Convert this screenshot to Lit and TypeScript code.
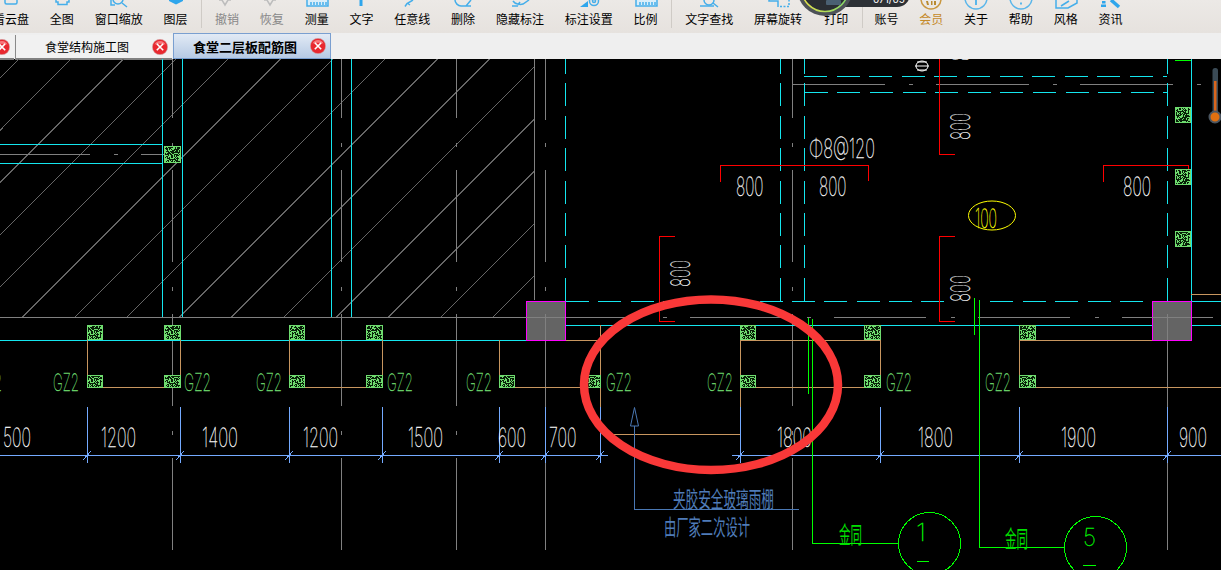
import { LitElement, html, css, svg } from "lit";
import { customElement } from "lit/decorators.js";

type Seg = [number, number, number, number];
const path = (cls: string, segs: Seg[]) =>
  svg`<path class=${"ln " + cls} d=${segs.map((s) => `M${s[0]} ${s[1]}L${s[2]} ${s[3]}`).join("")}></path>`;

const px = (v: number) => Math.floor(v) + 0.5;
const V = (x: number, a: number, b: number): Seg => [px(x), a, px(x), b];
const H = (y: number, a: number, b: number): Seg => [a, px(y), b, px(y)];

function dashV(x: number, from: number, to: number, start: number, period: number, on: number): Seg[] {
  const out: Seg[] = [];
  for (let s = start; s < to; s += period) {
    const a = Math.max(s, from);
    const b = Math.min(s + on, to);
    if (b > a) out.push(V(x, a, b));
  }
  return out;
}
function dashH(y: number, from: number, to: number, start: number, period: number, on: number): Seg[] {
  const out: Seg[] = [];
  for (let s = start; s < to; s += period) {
    const a = Math.max(s, from);
    const b = Math.min(s + on, to);
    if (b > a) out.push(H(y, a, b));
  }
  return out;
}

const hatch: Seg[] = [];
for (let k = -2; k < 18; k++) {
  const c = 78 + k * 52.3;
  hatch.push([c - 59, 59, c - 317, 317]);
}

const greyV = [172, 341.5, 456, 792];
const grey: Seg[] = [];
for (const x of greyV) {
  for (let s = 26; s < 570; s += 144) {
    grey.push(V(x, s, s + 92));
    grey.push(V(x, s + 117, s + 121));
  }
}
grey.push(V(534, 59, 300), V(545, 59, 120), V(545, 143, 147), V(545, 170, 262), V(545, 287, 291), V(545, 314, 407), V(545, 458, 550));
grey.push(V(1167, 314, 407), V(1167, 458, 550));
grey.push(H(317, 0, 526), H(154, 0, 90), H(154, 114, 118), H(154, 141, 165));
for (let s = 545.5; s < 1221; s += 144) {
  grey.push(H(317, s, Math.min(s + 92, 1213)));
  grey.push(H(317, s + 117, s + 121));
}
for (let s = 792; s < 1200; s += 144) {
  grey.push(H(84, s, s + 93));
  grey.push(H(84, s + 117, s + 121));
}

const cyan: Seg[] = [
  V(162, 59, 317), V(182, 59, 317), V(331, 59, 317), V(351, 59, 317), V(1191, 59, 301),
  H(144, 0, 162), H(163, 0, 162),
  H(340, 0, 526), H(325, 565, 1221), H(301, 1191, 1221),
  ...dashV(565, 59, 301, 50.9, 32.4, 23),
  ...dashV(780, 59, 301, 50.9, 32.4, 23),
  ...dashV(804, 59, 301, 50.9, 32.4, 23),
  ...dashV(1167, 59, 301, 50.9, 32.4, 23),
  ...dashH(76, 804, 1167, 804, 32.6, 23),
  ...dashH(92, 804, 1167, 804.7, 32.6, 23),
  ...dashH(301, 566, 947, 566, 32.3, 23),
  ...dashH(301, 990, 1152, 990, 32.5, 23),
];

const orange: Seg[] = [
  H(387, 87, 180), H(387, 289, 382), H(387, 499, 600), H(387, 740, 880), H(387, 1019, 1221),
  H(340, 565, 600), H(340, 740, 880), H(340, 1019, 1152),
  H(434, 610, 740), H(294, 1191, 1221),
  V(87, 340, 388), V(180, 340, 388), V(289, 340, 388), V(382, 340, 388), V(499, 340, 388),
  V(600, 325, 407), V(740, 340, 407), V(880, 325, 388), V(1019, 325, 388),
];

const dimX = [87, 180, 289, 382, 499, 545, 600, 740, 880, 1019, 1167];
const blue: Seg[] = [H(455, 0, 608), H(455, 732, 1221)];
for (const x of dimX) {
  blue.push(V(x, 407, 463));
  blue.push([x - 4, 460, x + 4, 451]);
}

const red: Seg[] = [
  H(165, 720, 868), V(720, 165, 182), V(868, 165, 181),
  H(165, 1103, 1188), V(1103, 165, 182), V(1188, 165, 180),
  V(939, 59, 154), H(154, 939, 955),
  H(236, 939, 955), V(939, 236, 321), H(321, 939, 955),
  H(236, 659, 675), V(659, 236, 321), H(321, 659, 675),
];

const green: Seg[] = [
  V(812, 319, 543), H(543, 812, 898), V(808, 318, 394),
  V(979, 300, 547), H(547, 979, 1065), V(974, 298, 335),
  H(60, 1175, 1191),
  H(561, 917, 929), H(565, 1083, 1096),
];

const steel: Seg[] = [V(634, 426, 509), H(509, 634, 799)];

const blocks: [number, number, number, number][] = [
  [164, 146, 17, 17],
  [87, 325, 16, 15], [164, 325, 17, 15], [289, 325, 16, 15], [366, 325, 17, 15],
  [87, 375, 16, 13], [164, 375, 17, 13], [289, 375, 16, 13], [366, 375, 17, 13],
  [499, 375, 16, 13], [586, 375, 15, 13],
  [740, 325, 16, 15], [740, 375, 16, 13],
  [864, 325, 17, 15], [864, 375, 17, 13],
  [1019, 325, 17, 15], [1019, 375, 17, 13],
  [1175, 107, 16, 16], [1175, 169, 16, 16], [1175, 231, 16, 16],
];

let seed = 17;
const rnd = () => ((seed = (seed * 16807) % 2147483647) / 2147483647);
const noise: [number, number][] = [];
for (let y = 0; y < 16; y++) for (let x = 0; x < 16; x++) if (rnd() < 0.55) noise.push([x, y]);

const labels: [string, string, number, number, number][] = [
  ["dim", "500", 3, 447, 28], ["dim", "1200", 101, 447, 35], ["dim", "1400", 202, 447, 36],
  ["dim", "1200", 303, 447, 35], ["dim", "1500", 408, 447, 35], ["dim", "600", 498, 447, 28],
  ["dim", "700", 549, 447, 27.5], ["dim", "1800", 777, 447, 35], ["dim", "1800", 918, 447, 35],
  ["dim", "1900", 1061, 447, 35], ["dim", "900", 1179, 447, 28],
  ["dim", "800", 736, 196, 27.5], ["dim", "800", 819, 196, 27.5], ["dim", "800", 1123, 196, 28],
  ["dim", "Φ8@120", 809, 158, 66],
  ["gz", "GZ2", -24, 391, 26], ["gz", "GZ2", 53, 391, 26], ["gz", "GZ2", 184, 391, 27],
  ["gz", "GZ2", 256, 391, 26], ["gz", "GZ2", 387, 391, 26], ["gz", "GZ2", 466, 391, 26],
  ["gz", "GZ2", 606, 391, 26], ["gz", "GZ2", 707, 391, 26], ["gz", "GZ2", 886, 391, 26],
  ["gz", "GZ2", 985, 391, 26],
  ["yl", "100", 975, 228, 22],
  ["cn", "夹胶安全玻璃雨棚", 673, 507, 101], ["cn", "由厂家二次设计", 664, 535, 86],
  ["jt", "金同", 839, 543, 23], ["jt", "金同", 1005, 547, 23],
  ["num", "1", 916, 541, 10], ["num", "5", 1083, 546, 13],
];
const rotated: [number, number][] = [[970, 61], [970, 140], [970, 302], [690, 287]];

const ICONS: Record<string, unknown> = {
  cloud: svg`<path class="ib" d="M6 0v2.5Q6 4 7.5 4h9Q18 4 18 2.5V0"></path>`,
  full: svg`<path class="ib" d="M6 0v2h2v2.5h9V2h2V0"></path>`,
  zoom: svg`<circle class="ib" cx="11" cy="-1" r="5"></circle><path class="ib" d="M15 3l5 4M4 0v5h4"></path>`,
  layer: svg`<path class="fb" d="M6 0h14v1l-7 3.5L6 1z"></path>`,
  undo: svg`<path class="ig" d="M7 0l3 5 3-5M4 0h3M13 0h3"></path>`,
  ruler: svg`<path class="fl" d="M2 -1h21v7H2z"></path><path class="ib" d="M2 -1v7h21v-7M6 2v3M9 2v3M12 2v3M15 2v3M18 2v3M21 2v3"></path>`,
  text: svg`<path class="fb" d="M10.5 0h3v6h-3z"></path>`,
  pen: svg`<path class="ib" d="M5 6.5l2-3 6-3.5M7 3l3 2"></path>`,
  erase: svg`<path class="ib" d="M4 0c0 3 3 6 6 6h10M15 6l5-6"></path>`,
  eye: svg`<path class="ib" d="M5 1c2 3 7 4 10 3l6-4M4 6h6M10 5l2-3"></path>`,
  gear: svg`<path class="fb" d="M3 7h8V1z"></path><circle class="ib" cx="17" cy="1" r="4.5"></circle><circle class="ib" cx="17" cy="1" r="1.5"></circle>`,
  find: svg`<circle class="ib" cx="12" cy="0" r="5"></circle><path class="ib" d="M3 6h14M16 3l5 4"></path>`,
  rotate: svg`<path class="ib" d="M3 0v1h9v6"></path><path class="ibd" d="M14 6.5h9V0"></path>`,
  vip: svg`<circle class="io" cx="12" cy="-1" r="10"></circle><path class="fo" d="M7 1h2l1 4H8zM12 1h1.500v4H12zM15 1h2v4h-2z"></path>`,
  info: svg`<circle class="il" cx="12" cy="-2" r="11"></circle><path class="fl2" d="M11 0h2v5h-2z"></path>`,
  help: svg`<circle class="il" cx="12" cy="-2" r="11"></circle><path class="fl2" d="M11 2.500h2v2h-2z"></path>`,
  style: svg`<path class="ib" d="M2 0v8h12l9-5V0M7 6l8-5"></path>`,
  news: svg`<path class="fb" d="M4 1h3.500v2.500H4zM3 4.500h5V7H3z"></path><path class="wr" d="M13 0l8 7"></path>`,
};

type Item = { t: string; i?: string; cls?: string } | "sep" | "sep3";
const ITEMS: Item[] = [
  { t: "看云盘", i: "cloud" }, { t: "全图", i: "full" }, { t: "窗口缩放", i: "zoom" }, { t: "图层", i: "layer" }, "sep",
  { t: "撤销", i: "undo", cls: "off" }, { t: "恢复", i: "undo", cls: "off" }, { t: "测量", i: "ruler" }, { t: "文字", i: "text" },
  { t: "任意线", i: "pen" }, { t: "删除", i: "erase" }, { t: "隐藏标注", i: "eye" }, { t: "标注设置", i: "gear" }, { t: "比例", i: "ruler" }, "sep",
  { t: "文字查找", i: "find" }, { t: "屏幕旋转", i: "rotate" }, { t: "打印", cls: "nudge" }, "sep3",
  { t: "账号" }, { t: "会员", i: "vip", cls: "vip" }, { t: "关于", i: "info" }, { t: "帮助", i: "help" }, { t: "风格", i: "style" }, { t: "资讯", i: "news" },
];

@customElement("app-root")
export class AppRoot extends LitElement {
  static styles = css`
    :host { display: block; position: relative; width: 1221px; height: 570px; overflow: hidden; background: #000;
      font-family: "Noto Sans CJK SC", "Liberation Sans", sans-serif; }
    .bar { display: flex; gap: 20.8px; height: 33px; box-sizing: border-box; padding-left: 0; overflow: hidden;
      background: linear-gradient(#ece9e6, #e6e2de); }
    .bar > :first-child { margin-left: -7px; }
    .item { display: flex; flex-direction: column; align-items: center; flex: none; font-size: 12px; line-height: 14px; color: #000; }
    .item svg { display: block; width: 24px; height: 12px; overflow: hidden; flex: none; }
    .item.off { color: #888; }
    .item.vip { color: #c58a2a; }
    .item.nudge { margin-left: 1.4px; }
    .sep { width: 1px; height: 28px; background: #cfcbc6; margin: 0 -8px 0 -7px; flex: none; }
    .sep.s3 { margin-right: -9.4px; }
    .ib, .ig, .io, .il, .ibd { fill: none; stroke-width: 1.5; }
    .ib, .ibd { stroke: #45aeea; }
    .ibd { stroke-dasharray: 2 1.5; }
    .ig { stroke: #bdbdbd; }
    .io { stroke: #c9973f; }
    .il { stroke: #5ab6ea; }
    .fb { fill: #2fa6ec; }
    .fl { fill: #d9eefa; }
    .fl2 { fill: #5ab6ea; }
    .fo { fill: #b98a30; }
    .wr { fill: none; stroke: #2fa6ec; stroke-width: 3.5; }

    .tabs { display: flex; height: 26px; background: #efefef; gap: 1px; margin-left: -143px; }
    .tab { display: flex; align-items: center; box-sizing: border-box; width: 157px; height: 25px; margin-top: 2px; flex: none;
      border-left: 1px solid #8a8a8a; border-bottom: 2px solid #808080; background: #f1f1f1; font-size: 12px; color: #000; }
    .tab.on { width: 158px; height: 26px; margin-top: 0; border: 1px solid #7a9fd0; font-weight: 700; font-size: 13px;
      background: linear-gradient(#e2eaf5, #b6cae4); }
    .name { width: 136px; padding-left: 6px; box-sizing: border-box; text-align: center; white-space: nowrap; flex: none; }
    .x { width: 16px; height: 16px; display: block; flex: none; }
    .xc { fill: #e8282f; stroke: #c8c0c0; stroke-width: .5; }
    .xh { fill: #f8787c; }
    .xl { stroke: #fff; stroke-width: 1.6; fill: none; }

    .cad { display: block; width: 1221px; height: 511px; background: #000; }
    .ln { fill: none; stroke-width: 1; shape-rendering: crispEdges; }
    .hatch { stroke: #666; }
    .grey { stroke: #808080; }
    .cyan { stroke: #14e6ee; }
    .orange { stroke: #c8965f; }
    .blue { stroke: #74aaff; }
    .red { stroke: #ff0000; }
    .green { stroke: #00ff00; }
    .steel { stroke: #4a78b4; }
    .gb { fill: #6fdc6f; stroke: #6fdc6f; stroke-width: 1; shape-rendering: crispEdges; }
    .pk { fill: #082008; }
    .col { fill: #646464; stroke: #ff00ff; stroke-width: 1; shape-rendering: crispEdges; }
    .arrow { fill: #000; stroke: #4a78b4; stroke-width: 1; }
    .cir { fill: none; stroke: #00ff00; stroke-width: 1; shape-rendering: crispEdges; }
    .yel { fill: none; stroke: #ffff00; stroke-width: 1; }
    .sym { fill: none; stroke: #fff; stroke-width: 1; }
    .ring { fill: none; stroke: #f93838; stroke-width: 8.5; }

    text { font-family: "Inter", "Roboto", "Liberation Sans", sans-serif; font-weight: 100; }
    .dim { font-size: 26.5px; fill: #fff; stroke: #fff; stroke-width: .3; }
    .gz { font-size: 23.5px; fill: #6fdc6f; stroke: #6fdc6f; stroke-width: .3; }
    .yl { font-size: 26.5px; fill: #ffff00; stroke: #ffff00; stroke-width: .3; }
    .cn { font-family: "Noto Sans CJK SC", sans-serif; font-size: 22px; fill: #4f7cb8; font-weight: 400; }
    .jt { font-family: "Noto Sans CJK SC", sans-serif; font-size: 23px; fill: #00e000; font-weight: 400; }
    .num { font-size: 24px; fill: #00ff00; stroke: #00ff00; stroke-width: .3; }
    .tube { fill: #3a4a55; }
    .merc { fill: #d9651c; }
    .bulb { fill: #e07010; stroke: #4a5560; stroke-width: 2; }

    .gauge { position: absolute; left: 790px; top: 0; width: 130px; height: 20px; display: block; }
    .pill { fill: #2d3136; }
    .g1 { fill: #4d5258; }
    .g2 { fill: #2a2e33; stroke: url(#rg); stroke-width: 1.5; }
    .g3 { fill: #4a6072; }
    .gt { font-size: 10px; fill: #fff; font-weight: 400; }
  `;

  private close() {
    return html`<svg class="x" viewBox="0 0 16 16">
      <circle class="xc" cx="8" cy="8" r="7.7"></circle>
      <path class="xh" d="M2.500 5.500a6 6 0 0 1 11 0a11 6 0 0 0-11 0z"></path>
      <path class="xl" d="M4.800 4.800l6.400 6.400M11.200 4.800l-6.400 6.400"></path>
    </svg>`;
  }

  render() {
    return html`
      <div class="bar">
        ${ITEMS.map((it) =>
          it === "sep" ? html`<div class="sep"></div>`
          : it === "sep3" ? html`<div class="sep s3"></div>`
          : html`<div class="item ${it.cls ?? ""}">
              <svg viewBox="0 0 24 12">${it.i ? ICONS[it.i] : ""}</svg>
              <span>${it.t}</span>
            </div>`
        )}
      </div>
      <div class="tabs">
        <div class="tab"><span class="name">食堂建筑施工图</span>${this.close()}</div>
        <div class="tab"><span class="name">食堂结构施工图</span>${this.close()}</div>
        <div class="tab on"><span class="name">食堂二层板配筋图</span>${this.close()}</div>
      </div>
      <svg class="cad" viewBox="0 59 1221 511">
        <defs>
          <pattern id="nz" width="16" height="16" patternUnits="userSpaceOnUse">
            ${noise.map((n) => svg`<rect class="pk" x=${n[0]} y=${n[1]} width="1" height="1"></rect>`)}
          </pattern>
          <clipPath id="hc"><rect x="0" y="59" width="534" height="258"></rect></clipPath>
        </defs>
        <g clip-path="url(#hc)">${path("hatch", hatch)}</g>
        ${path("grey", grey)}
        ${path("cyan", cyan)}
        ${path("orange", orange)}
        ${path("blue", blue)}
        ${path("red", red)}
        ${path("green", green)}
        ${path("steel", steel)}
        <path class="arrow" d="M634.500 407.500L630.500 426H638.500Z"></path>
        <rect class="col" x="526.500" y="301.500" width="39" height="39"></rect>
        <rect class="col" x="1152.500" y="301.500" width="39" height="39"></rect>
        ${path("grey", [V(545, 314, 340), H(317, 526, 565), V(1167, 314, 340), H(317, 1152, 1191)])}
        ${blocks.map((b) => svg`
          <rect class="gb" x=${b[0] + 0.5} y=${b[1] + 0.5} width=${b[2] - 1} height=${b[3] - 1}></rect>
          <rect fill="url(#nz)" x=${b[0] + 1} y=${b[1] + 1} width=${b[2] - 2} height=${b[3] - 2}></rect>`)}
        <ellipse class="yel" cx="992" cy="215.500" rx="23.500" ry="14.500"></ellipse>
        <circle class="cir" cx="929.500" cy="543.500" r="31"></circle>
        <circle class="cir" cx="1095.500" cy="547.500" r="31"></circle>
        <ellipse class="sym" cx="922" cy="66" rx="6" ry="5"></ellipse>
        <path class="sym" d="M915 66h14M917 62h10M917 70h10"></path>
        ${labels.map((l) => svg`<text class=${l[0]} x=${l[2]} y=${l[3]} textLength=${l[4]} lengthAdjust="spacingAndGlyphs">${l[1]}</text>`)}
        ${rotated.map((r) => svg`<text class="dim" transform=${`translate(${r[0]},${r[1]}) rotate(-90)`} textLength="27" lengthAdjust="spacingAndGlyphs">800</text>`)}
        <ellipse class="ring" cx="711" cy="384.700" rx="127" ry="85.300"></ellipse>
        <rect class="tube" x="1212.500" y="68" width="5.500" height="50" rx="2.500"></rect>
        <rect class="merc" x="1214" y="81" width="2.500" height="34"></rect>
        <circle class="bulb" cx="1215" cy="117" r="5.500"></circle>
      </svg>
      <svg class="gauge" viewBox="790 0 130 20">
        <defs>
          <linearGradient id="rg" x1="0" x2="1" y1="0" y2="0">
            <stop offset="0" stop-color="#e8e24a"></stop>
            <stop offset="1" stop-color="#7fd86a"></stop>
          </linearGradient>
        </defs>
        <rect class="pill" x="815" y="-30" width="95" height="37" rx="13"></rect>
        <circle class="g1" cx="825" cy="-12" r="28"></circle>
        <circle class="g2" cx="825" cy="-12" r="23.500"></circle>
        <rect class="g3" x="826" y="0" width="15" height="5" rx="1"></rect>
        <text class="gt" x="873" y="3">071/05</text>
      </svg>
    `;
  }
}
